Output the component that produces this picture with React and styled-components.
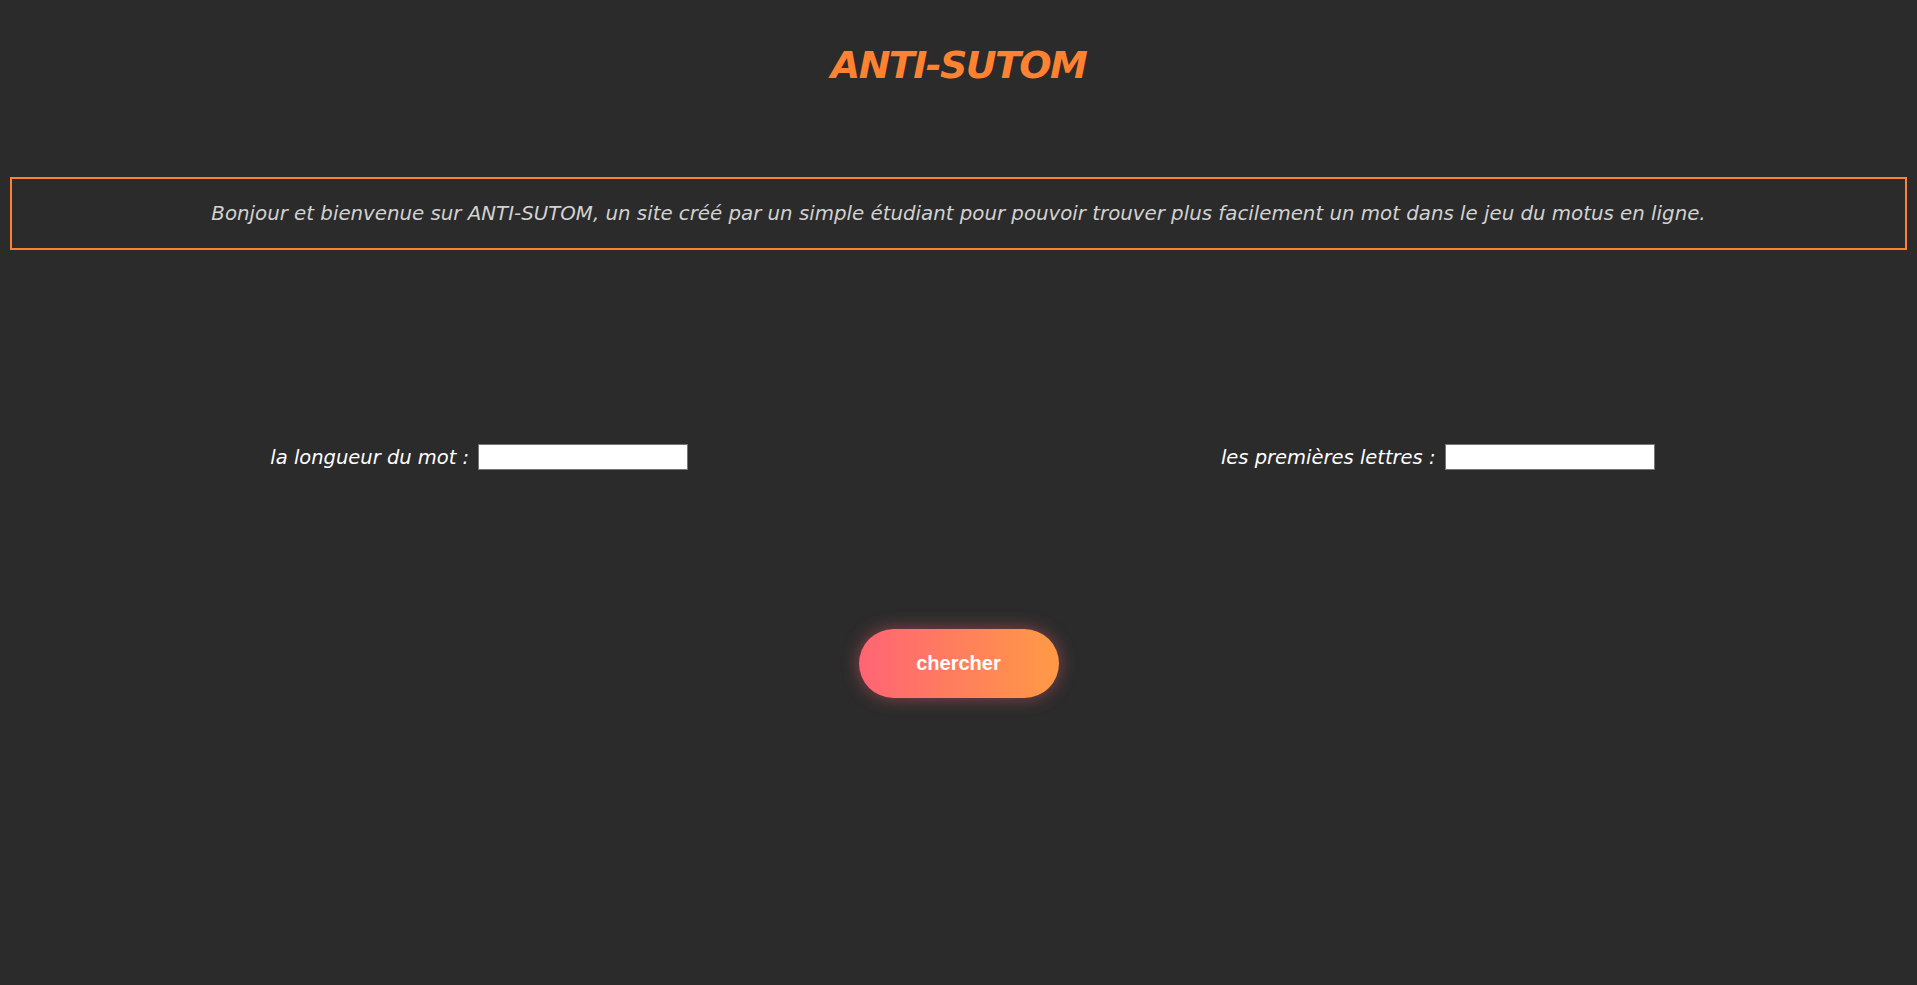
import React from 'react';
import styled, { createGlobalStyle } from 'styled-components';

const GlobalStyle = createGlobalStyle`
  html, body {
    margin: 0;
    padding: 0;
    background: #2b2b2b;
    min-height: 100%;
  }
  body {
    font-family: "DejaVu Sans", "Open Sans", sans-serif;
  }
`;

const Page = styled.div`
  min-height: 985px;
  background: #2b2b2b;
  padding-top: 41px;
  box-sizing: border-box;
`;

const Title = styled.h1`
  margin: 0;
  text-align: center;
  font-family: "DejaVu Sans", sans-serif;
  font-size: 38px;
  line-height: 48px;
  font-weight: bold;
  font-style: italic;
  color: #ff8232;
  letter-spacing: -1.6px;
`;

const Intro = styled.div`
  margin: 88px 10px 0;
  border: 2px solid #ff8232;
  padding: 20px 0;
  text-align: center;
`;

const IntroText = styled.p`
  margin: 0;
  font-size: 19.8px;
  line-height: 29px;
  font-style: italic;
  color: #d2d2d2;
`;

const Fields = styled.div`
  display: grid;
  grid-template-columns: 1fr 1fr;
  margin-top: 194px;
`;

const Field = styled.label`
  display: flex;
  justify-content: center;
  align-items: center;
  gap: 9px;
  font-size: 19.5px;
  font-style: italic;
  color: #ffffff;
`;

const TextInput = styled.input`
  width: 210px;
  height: 26px;
  box-sizing: border-box;
  border: 1px solid #767676;
  background: #ffffff;
  padding: 0 4px;
  margin: 0;
  font-size: 14px;
`;

const Actions = styled.div`
  display: flex;
  justify-content: center;
  margin-top: 159px;
`;

const SearchButton = styled.button`
  width: 200px;
  height: 69px;
  border: none;
  border-radius: 35px;
  background: linear-gradient(90deg, #ff6474 0%, #ff9a45 100%);
  box-shadow: 0 0 18px rgba(255, 100, 116, 0.45);
  color: #ffffff;
  font-family: "Liberation Sans", Arial, sans-serif;
  font-weight: bold;
  font-size: 20px;
  cursor: pointer;
`;

export default function App() {
  return (
    <>
      <GlobalStyle />
      <Page>
        <Title>ANTI-SUTOM</Title>
        <Intro>
          <IntroText>
            Bonjour et bienvenue sur ANTI-SUTOM, un site créé par un simple étudiant pour pouvoir trouver plus facilement un mot dans le jeu du motus en ligne.
          </IntroText>
        </Intro>
        <Fields>
          <Field>
            la longueur du mot :
            <TextInput type="text" />
          </Field>
          <Field>
            les premières lettres :
            <TextInput type="text" />
          </Field>
        </Fields>
        <Actions>
          <SearchButton>chercher</SearchButton>
        </Actions>
      </Page>
    </>
  );
}
